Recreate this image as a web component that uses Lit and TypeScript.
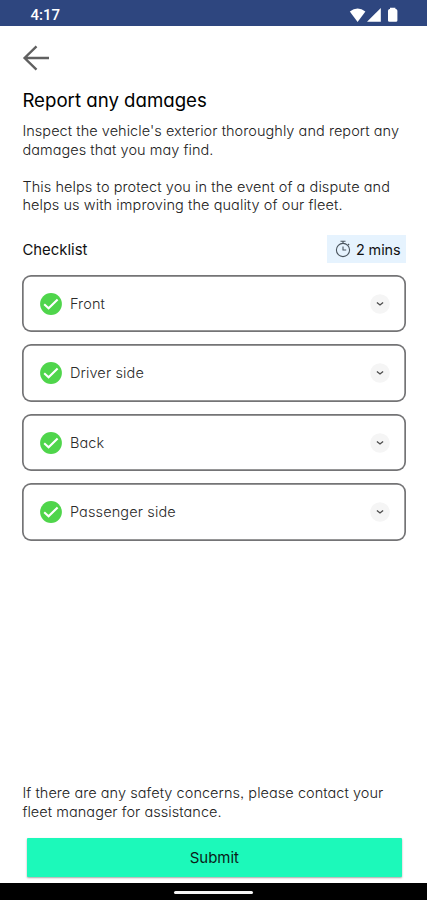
import { LitElement, html, css } from "lit";
import { customElement, property, state } from "lit/decorators.js";

@customElement("check-card")
class CheckCard extends LitElement {
  @property() label = "";

  static styles = css`
    :host {
      display: flex;
      align-items: center;
      box-sizing: border-box;
      height: 57.5px;
      padding: 0 16.5px 0 18px;
      border-radius: 9px;
      background: #fff;
      box-shadow: inset 0 0 0 1.7px #747476;
    }
    .tick { width: 22px; height: 22px; flex: none; }
    .label {
      flex: 1;
      margin-left: 7.5px;
      font-size: 14.5px;
      line-height: 20px;
      letter-spacing: 0.13px;
      color: #2b2b2b;
    }
    .chevron { width: 20px; height: 20px; flex: none; }
  `;

  render() {
    return html`
      <svg class="tick" viewBox="0 0 22 22">
        <circle cx="11" cy="11" r="10.9" fill="#4fd54b" />
        <path d="M4.2 11.2 8.6 15.3 17.6 6.4" fill="none" stroke="#fff" stroke-width="2.1" />
      </svg>
      <span class="label">${this.label}</span>
      <svg class="chevron" viewBox="0 0 20 20">
        <circle cx="10" cy="10" r="9.8" fill="#f5f5f5" />
        <path d="M6.9 8.4 10 11 13.1 8.4" fill="none" stroke="#4c4c4c" stroke-width="1.3" />
      </svg>
    `;
  }
}

@customElement("app-root")
class AppRoot extends LitElement {
  @state() items = ["Front", "Driver side", "Back", "Passenger side"];

  static styles = css`
    :host {
      display: flex;
      flex-direction: column;
      box-sizing: border-box;
      width: 100%;
      height: 100vh;
      background: #fff;
      color: #111;
      font-family: Inter, "Liberation Sans", sans-serif;
      font-weight: 300;
      font-feature-settings: "cv11", "ss03";
      overflow: hidden;
    }
    .status {
      display: flex;
      align-items: center;
      justify-content: space-between;
      box-sizing: border-box;
      height: 26px;
      flex: none;
      padding: 3px 28px 0 30.5px;
      background: #2e467f;
      color: #fff;
      font: 500 15px/20px Roboto, sans-serif;
    }
    .icons { width: 50px; height: 16px; }
    .page {
      display: flex;
      flex-direction: column;
      flex: 1;
      padding: 18px 21px 0 22.4px;
    }
    .back { width: 28px; height: 28px; }
    h1 {
      margin: 15px 0 0;
      font-size: 18.65px;
      line-height: 26px;
      font-weight: 400;
      white-space: nowrap;
      color: #000;
    }
    p {
      margin: 9px 0 0;
      font-size: 14.5px;
      line-height: 18.6px;
      letter-spacing: 0.05px;
      color: #222;
      white-space: nowrap;
    }
    p + p { margin-top: 18.6px; letter-spacing: 0.08px; }
    p span { display: block; }
    .head {
      display: flex;
      align-items: center;
      justify-content: space-between;
      height: 28px;
      margin-top: 20.5px;
    }
    h2 { margin: 0; padding-top: 1px; font-size: 14.9px; line-height: 20px; font-weight: 400; color: #111; }
    .time {
      display: flex;
      align-items: center;
      box-sizing: border-box;
      width: 79px;
      height: 28px;
      padding-left: 8px;
      gap: 5px;
      background: #e6f3fe;
      font-size: 14.4px;
      font-weight: 400;
      letter-spacing: -0.1px;
      white-space: nowrap;
    }
    .time svg { width: 16px; height: 18px; }
    .list {
      display: flex;
      flex-direction: column;
      gap: 12px;
      margin-top: 11.5px;
    }
    .foot { margin-top: auto; }
    button {
      height: 39px;
      margin: 16px 4px 6.5px 4.3px;
      padding: 1px 0 0;
      border: 0;
      border-radius: 1px;
      background: #1cf9ba;
      box-shadow: 0 1px 2px rgba(0, 0, 0, 0.35);
      color: #0b1c18;
      font: 400 15px/20px Inter, sans-serif;
    }
    .nav {
      display: flex;
      justify-content: center;
      box-sizing: border-box;
      flex: none;
      height: 17px;
      padding-top: 8px;
      background: #000;
    }
    .pill { width: 79px; height: 3px; border-radius: 2px; background: #f4f4f4; }
  `;

  render() {
    return html`
      <div class="status">
        <span>4:17</span>
        <svg class="icons" viewBox="0 0 50 16">
          <g fill="#fff">
            <path d="M0.8 4.6Q8.6 -1.6 16.4 4.6L8.6 15Z" />
            <path d="M31.8 1V14.8H18Z" />
            <path d="M39 3.8Q39 2.4 40.4 2H41V0.8H46.4V2H47Q48.4 2.4 48.4 3.8V13.4Q48.4 14.8 47 14.8H40.4Q39 14.8 39 13.4Z" />
          </g>
        </svg>
      </div>
      <div class="page">
        <svg class="back" viewBox="0 0 28 28">
          <path d="M27 14H2.6M14.5 2.4 2.6 14 14.5 25.6" fill="none" stroke="#606060" stroke-width="2.4" />
        </svg>
        <h1>Report any damages</h1>
        <p>
          <span>Inspect the vehicle's exterior thoroughly and report any</span>
          <span>damages that you may find.</span>
        </p>
        <p>
          <span>This helps to protect you in the event of a dispute and</span>
          <span>helps us with improving the quality of our fleet.</span>
        </p>
        <div class="head">
          <h2>Checklist</h2>
          <div class="time">
            <svg viewBox="0 0 16 18" fill="none" stroke="#4b555e" stroke-width="1.1">
              <circle cx="8" cy="10" r="6.6" />
              <path d="M5.5 1.2H10.5M8 1.2V3.4M13 4 14.2 5.2M8 6.6V10H11.2" />
            </svg>
            <span>2 mins</span>
          </div>
        </div>
        <div class="list">
          ${this.items.map((item) => html`<check-card .label=${item}></check-card>`)}
        </div>
        <p class="foot">
          <span>If there are any safety concerns, please contact your</span>
          <span>fleet manager for assistance.</span>
        </p>
        <button>Submit</button>
      </div>
      <div class="nav"><div class="pill"></div></div>
    `;
  }
}
